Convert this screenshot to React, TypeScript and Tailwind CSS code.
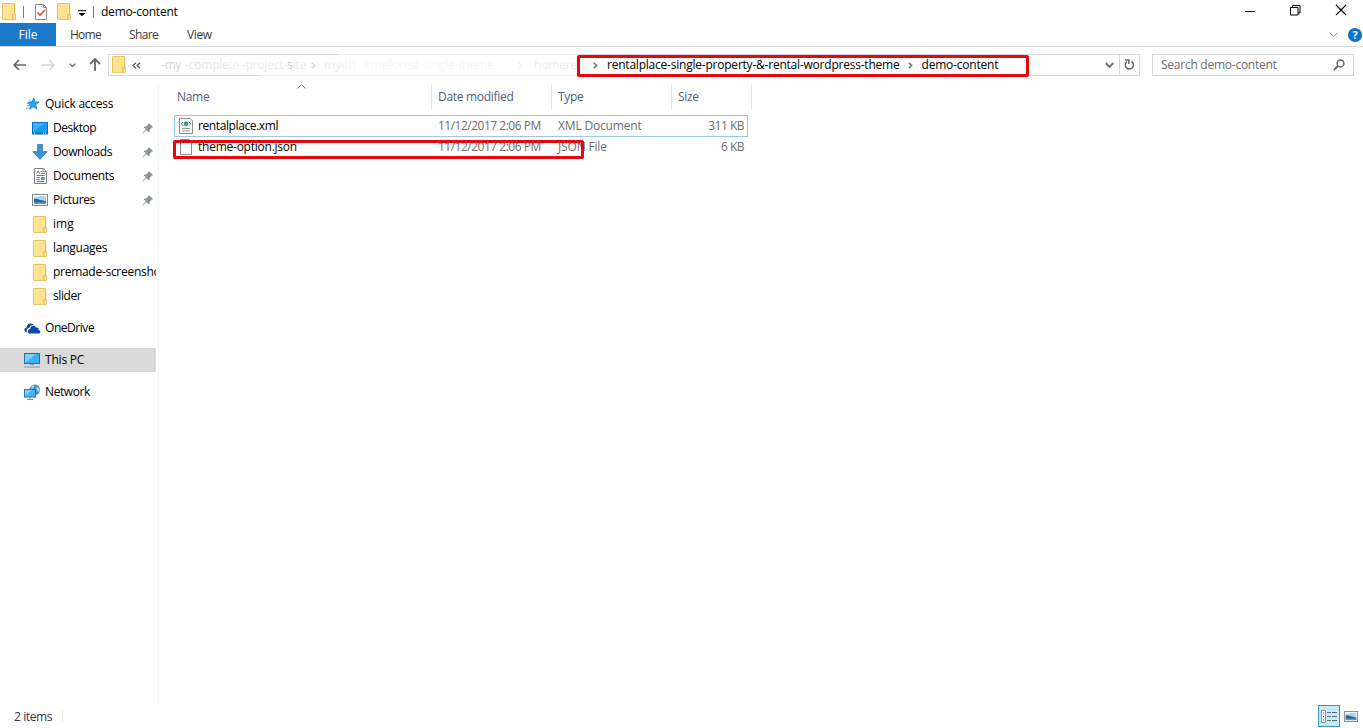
import type { ReactNode } from "react";

function Folder({ className = "" }: { className?: string }) {
  return (
    <svg width="14" height="17" viewBox="0 0 14 17" className={`shrink-0 ${className}`}>
      <path d="M.5 .5h12v11h.9v4.9H.5z" fill="#fde392" stroke="#e6c365" />
      <path d="M10.8 16v-4.4h1.9V1" fill="none" stroke="#e3b84b" />
    </svg>
  );
}

function Pin() {
  return (
    <svg width="12" height="12" viewBox="0 0 12 12" className="shrink-0">
      <path d="M6.6.8 11.3 5.2 9.8 5.6 7.9 7.6 7.7 10 6.3 9.9 4.4 8 1 11.3 .6 10.9 3.7 7.3 2 5.6 2 4.4 4.6 4.2 6.4 2.2z" fill="#8d969c" />
    </svg>
  );
}

function Star() {
  return (
    <svg width="16" height="16" viewBox="0 0 16 16" className="ml-[2px] shrink-0">
      <path d="M8.800 2 9.800 5.900 13.900 6 10.600 8.600 12 13 8.100 10.700 4.600 13.300 5.500 9.200 2.800 6.600 6.700 6z" fill="#2ea4ee" stroke="#1785cf" strokeWidth=".9" />
      <path d="M3.500 5h2.500M1.500 7.500h3M2 9.500h3M1 12.300h4" stroke="#5fb0e0" strokeWidth="1" />
    </svg>
  );
}

function Desktop() {
  return (
    <svg width="16" height="13" viewBox="0 0 16 13" className="shrink-0">
      <rect x=".5" y=".5" width="15" height="11.5" fill="#169bf0" stroke="#0c70b8" />
      <path d="M1 10V1h12z" fill="#38b2fb" />
      <path d="M1 11.2h14" stroke="#0a66ad" />
      <path d="M2 11.2h1M11 11.2h1M13 11.2h1" stroke="#fff" />
    </svg>
  );
}

function Download() {
  return (
    <svg width="16" height="16" viewBox="0 0 16 16" className="shrink-0">
      <path d="M5.5.5h5v7h4.7L8 15.4.8 7.5h4.7z" fill="#3b92dc" stroke="#2c7cc5" strokeWidth=".8" />
    </svg>
  );
}

function Documents() {
  return (
    <svg width="13" height="16" viewBox="0 0 13 16" className="shrink-0">
      <path d="M.5.5h8.6l3.4 3v12H.5z" fill="#fff" stroke="#7d7d7d" />
      <path d="M9 .5v3.2h3.5" fill="none" stroke="#7d7d7d" />
      <path d="M2.5 5.8 4.3 2.8 5.6 5.8M6.6 3.5h1.6M6.6 5.5h4M2.5 7.5h8M2.5 9.5h3.3M2.5 11.5h3.3M2.5 13.5h8" fill="none" stroke="#2f8d9c" />
      <path d="M6.8 9h4v3h-4z" fill="#5b9bb8" />
    </svg>
  );
}

function Picture({ small = false }: { small?: boolean }) {
  return (
    <svg width={small ? 14 : 16} height={small ? 11 : 12} viewBox="0 0 16 12" preserveAspectRatio="none" className="shrink-0">
      <rect x=".5" y=".5" width="15" height="11" fill="#fff" stroke="#858585" />
      <rect x="2" y="2" width="12" height="8" fill="#a9d3f5" />
      <path d="M2 4.800c3-.8 5 1.500 12 2.200v2H2z" fill="#2f6276" />
      <path d="M2 8h12v2H2z" fill="#4b92c8" />
      <path d="M2 2h6L5 3.5 2 3.8z" fill="#d8ecfb" />
    </svg>
  );
}

function OneDrive() {
  return (
    <svg width="17" height="11" viewBox="0 0 17 11" className="shrink-0">
      <path d="M2.8 9.5A2.9 2.9 0 0 1 .6 7.9C0 6 1.300 4.800 2.600 4.600 2.500 2.200 4.200.4 6.400.4 8 .3 9.300 1 10 2.200 7.800 1.700 5.900 2.900 5.500 4.800 3.300 5 2.100 7 2.800 9.500z" fill="#0c49a8" />
      <path d="M5.600 10.600C3.100 10.300 3 6.500 6.200 6 6.200 2.500 10.500 1.500 12 4.500 13.800 4.100 15 5.500 14.700 7 17 7.400 16.800 10.500 14.700 10.600z" fill="#0c49a8" />
    </svg>
  );
}

function Pc() {
  return (
    <svg width="16" height="16" viewBox="0 0 16 16" className="shrink-0">
      <rect x=".5" y="1.500" width="15" height="10" fill="#39b1f2" stroke="#286f9d" />
      <path d="M1 11V2h11z" fill="#7bd1fb" />
      <path d="M6 12.500h4M0 15h16" stroke="#7a97aa" />
    </svg>
  );
}

function NetworkIcon() {
  return (
    <svg width="17" height="16" viewBox="0 0 17 16" className="shrink-0">
      <circle cx="10.800" cy="5.800" r="5.300" fill="#3f8fc0" />
      <path d="M7.500 2.500c2-2 3.500-.5 2.500 1S8 5 7 4.500M13 3c1.500 0 2.500 2 2.500 3.500s-1.500 1.500-2.300.3-1.200-3-.2-3.800z" fill="#a9dcef" />
      <rect x=".5" y="5.500" width="11" height="7.500" fill="#42b5f2" stroke="#23729f" />
      <path d="M1 12V6h7z" fill="#79d0fa" />
      <path d="M6 13v2M3 15.400h6" stroke="#7091a4" />
    </svg>
  );
}

function FileDoc({ xml = false }: { xml?: boolean }) {
  return (
    <svg width="14" height="16" viewBox="0 0 14 16" className="shrink-0">
      <path d={xml ? "M.5.5H11l2.500 2.500v12.500H.5z" : "M1.500.5h9l2 2v13h-11z"} fill="#fdfdfd" stroke="#8c8c8c" />
      {xml && (
        <>
          <path d="M4 4 2.300 5.800 4 7.600M10 4l1.700 1.800L10 7.600" fill="none" stroke="#4b6688" />
          <circle cx="7" cy="5.800" r="2.200" fill="#3b9a87" />
          <circle cx="6.600" cy="5" r=".8" fill="#356ea6" />
          <path d="M3 10.500h8M3 12.800h8" stroke="#999" />
        </>
      )}
    </svg>
  );
}

function Chevron({ className = "" }: { className?: string }) {
  return (
    <svg width="5" height="7" viewBox="0 0 5 7" className={`shrink-0 ${className}`}>
      <path d="M.8.8 3.700 3.500.8 6.200" fill="none" stroke="#707070" strokeWidth="1.500" />
    </svg>
  );
}

function NavItem({ icon, label, pinned, root, selected, tracking = "tracking-[-0.2px]" }: {
  icon: ReactNode; label: string; pinned?: boolean; root?: boolean; selected?: boolean; tracking?: string;
}) {
  return (
    <div className={`flex h-6 w-[156px] items-center ${root ? "pl-6" : "pl-8"} ${selected ? "bg-[#d9d9d9]" : ""}`}>
      <span className="flex w-[21px] shrink-0 items-center"><span className="flex w-4 shrink-0 justify-center">{icon}</span></span>
      <span className={`min-w-0 flex-1 overflow-hidden whitespace-nowrap text-black ${tracking}`}>{label}</span>
      {pinned && <span className="mr-[2px]"><Pin /></span>}
    </div>
  );
}

function TitleBar() {
  return (
    <header className="flex h-[23px] shrink-0 items-center">
      <Folder className="ml-[2px]" />
      <div className="ml-[7px] h-3 w-px bg-[#777]" />
      <svg width="12" height="16" viewBox="0 0 12 16" className="ml-[11px] mt-px">
        <path d="M.5.5h8l3 3v12H.5z" fill="#fff" stroke="#8a8a8a" />
        <path d="M8.500.5v3h3" fill="none" stroke="#8a8a8a" />
        <path d="m2.500 8.500 2.500 2.800 5-5.600" fill="none" stroke="#e3562c" strokeWidth="1.700" />
      </svg>
      <Folder className="ml-[10px]" />
      <svg width="8" height="7" viewBox="0 0 8 7" className="ml-[7px] mt-[3px]">
        <path d="M0 .7h8" stroke="#000" /><path d="M.5 3h7L4 6.300z" />
      </svg>
      <div className="ml-[7px] h-3 w-px bg-[#777]" />
      <span className="ml-[7px] pt-px tracking-[-0.22px] text-black">demo-content</span>
      <div className="ml-auto mr-[16px] flex items-center">
        <svg width="11" height="12" viewBox="0 0 11 12"><path d="M1 5.500h10" stroke="#000" /></svg>
        <svg width="11" height="11" viewBox="0 0 11 11" className="ml-[35px] -mt-[3px]">
          <path d="M.5 2.500h7.500v7.500H.5zM2.500 2.500v-2h7.500v7.500H8" fill="none" stroke="#000" />
        </svg>
        <svg width="12" height="12" viewBox="0 0 12 12" className="ml-[34px] -mt-[4px]"><path d="m1 1 10 10M11 1 1 11" stroke="#000" strokeWidth="1.100" /></svg>
      </div>
    </header>
  );
}

function Ribbon() {
  return (
    <nav className="flex h-6 shrink-0 items-stretch border-b border-[#dadbdc] leading-[24px] text-[#3b3b3b]">
      <div className="w-14 bg-[#1979ca] text-center text-white">File</div>
      <div className="ml-[14px] w-[59px] tracking-[-0.75px]">Home</div>
      <div className="w-[58px] tracking-[-0.6px]">Share</div>
      <div className="tracking-[-0.4px]">View</div>
      <div className="ml-auto mr-px flex items-center gap-[10px]">
        <svg width="9" height="5" viewBox="0 0 9 5"><path d="m.5.5 4 3.900L8.500.5" fill="none" stroke="#8c8c8c" /></svg>
        <span className="flex size-[14px] items-center justify-center rounded-full bg-[#0b72c9] text-[11px] font-bold text-white">?</span>
      </div>
    </nav>
  );
}

function AddressRow() {
  return (
    <div className="flex h-[37px] shrink-0 items-center">
      <svg width="13" height="12" viewBox="0 0 13 12" className="-mt-[2px] ml-[13px]"><path d="M6 1 1.200 6 6 11M1.500 6H13" fill="none" stroke="#676767" strokeWidth="1.700" /></svg>
      <svg width="13" height="12" viewBox="0 0 13 12" className="-mt-[2px] ml-[16px]"><path d="m7 1 5 5-5 5M11.500 6H0" fill="none" stroke="#d2d2d2" strokeWidth="1.400" /></svg>
      <svg width="7" height="5" viewBox="0 0 7 5" className="-mt-px ml-[14px]"><path d="m.7.7 2.800 2.800L6.300.7" fill="none" stroke="#777" strokeWidth="1.500" /></svg>
      <svg width="12" height="13" viewBox="0 0 12 13" className="-mt-[2px] ml-[13px]"><path d="m1 6 5-5 5 5M6 1.500V13" fill="none" stroke="#676767" strokeWidth="1.800" /></svg>
      <div className="relative ml-[7px] -mt-px flex h-[22px] w-[1032px] items-center border border-[#d9d9d9]">
        <Folder className="-mt-px ml-[3px]" />
        <svg width="9" height="7" viewBox="0 0 9 7" className="ml-[6px] mt-px"><path d="M4 .7 1 3.500 4 6.300M8 .7 5 3.500 8 6.300" fill="none" stroke="#555" strokeWidth="1.200" /></svg>
        <div className="ml-[20px] flex w-[432px] items-center whitespace-nowrap tracking-[-0.2px]">
          <span className="w-[24px] text-[#d4d4d4]">-my</span>
          <span className="w-[54px] text-[#e6e6e6]">-comple<span className="text-[#f1f1f1]">te</span></span>
          <span className="w-[72px] pl-[3px] text-[#ececec]">-project-<span className="text-[#c8c8c8]">s</span>ite</span>
          <Chevron className="opacity-30" />
          <span className="ml-[8px] w-[40px] text-[#eeeeee]">my-<span className="text-[#f6f6f6]">th</span></span>
          <span className="w-[154px] text-[#f5f5f5]">emeforest-single-theme</span>
          <Chevron className="opacity-10" />
          <span className="ml-[11px] text-[#ededed]">homerent</span>
        </div>
        <Chevron />
        <span className="ml-[9px] tracking-[-0.22px] text-black">rentalplace-single-property-&amp;-rental-wordpress-theme</span>
        <Chevron className="ml-[8px]" />
        <span className="ml-[9px] tracking-[-0.2px] text-black">demo-content</span>
        <div className="ml-auto flex h-full items-center">
          <svg width="9" height="7" viewBox="0 0 9 7" className="mt-px"><path d="m.8 1 3.700 4L8.200 1" fill="none" stroke="#707070" strokeWidth="1.900" /></svg>
          <div className="ml-[5px] flex h-full w-5 items-center justify-center border-l border-[#d9d9d9]">
            <svg width="11" height="12" viewBox="0 0 11 12"><path d="M7.500 2.500A4.100 4.100 0 1 1 3 2.700M1 1h3.800v4" fill="none" stroke="#666" strokeWidth="1.500" /></svg>
          </div>
        </div>
        <div className="absolute left-[230px] top-[-1px] h-px w-[240px] bg-[#efefef]" />
        <div className="absolute left-[150px] top-[20px] h-px w-[319px] bg-[#efefef]" />
        <div className="absolute left-[468px] top-0 h-[22px] w-[452px] rounded-[2px] border-[3px] border-[#e6080d]" />
      </div>
      <div className="-mt-px ml-3 flex h-[22px] w-[202px] items-center justify-between border border-[#d9d9d9] pl-2 pr-[8px] text-[#6d6d6d]">
        <span className="tracking-[-0.25px]">Search demo-content</span>
        <svg width="12" height="12" viewBox="0 0 12 12"><circle cx="7.500" cy="4.400" r="3.400" fill="none" stroke="#666" strokeWidth="1.500" /><path d="M5 7 1 11" stroke="#666" strokeWidth="1.900" /></svg>
      </div>
    </div>
  );
}

function FileRow({ name, date, type, size, xml }: { name: string; date: string; type: string; size: string; xml?: boolean }) {
  return (
    <div className={`flex h-[22px] w-[574px] items-center border text-[#6d6d6d] ${xml ? "border-[#99c9e8]" : "border-transparent"}`}>
      <div className="flex w-[263px] items-center gap-[5px] pl-1 text-black">
        <FileDoc xml={xml} />
        <span className={xml ? "tracking-[-0.4px]" : "tracking-[-0.24px]"}>{name}</span>
      </div>
      <span className="w-[120px] tracking-[-0.5px]">{date}</span>
      <span className="w-[120px] tracking-[-0.17px]">{type}</span>
      <span className="flex-1 pr-[3px] text-right tracking-[-0.5px]">{size}</span>
    </div>
  );
}

export default function App() {
  return (
    <div className="flex h-[728px] w-[1363px] flex-col overflow-hidden bg-white font-['Open_Sans','Noto_Sans',sans-serif] text-[12px] leading-4">
      <TitleBar />
      <Ribbon />
      <AddressRow />
      <div className="flex min-h-0 flex-1">
        <aside className="w-[159px] shrink-0 border-r border-[#f3f3f3] pt-2">
          <NavItem root icon={<Star />} label="Quick access" tracking="tracking-[-0.25px]" />
          <NavItem icon={<Desktop />} label="Desktop" pinned tracking="tracking-[-0.45px]" />
          <NavItem icon={<Download />} label="Downloads" pinned tracking="tracking-[-0.4px]" />
          <NavItem icon={<Documents />} label="Documents" pinned tracking="tracking-[-0.35px]" />
          <NavItem icon={<Picture />} label="Pictures" pinned tracking="tracking-[-0.4px]" />
          <NavItem icon={<Folder />} label="img" tracking="tracking-normal" />
          <NavItem icon={<Folder />} label="languages" tracking="tracking-[-0.25px]" />
          <NavItem icon={<Folder />} label="premade-screenshots" tracking="tracking-[-0.28px]" />
          <NavItem icon={<Folder />} label="slider" tracking="tracking-[-0.4px]" />
          <div className="mt-2 flex flex-col gap-2">
            <NavItem root icon={<OneDrive />} label="OneDrive" tracking="tracking-[-0.45px]" />
            <NavItem root icon={<Pc />} label="This PC" selected />
            <NavItem root icon={<NetworkIcon />} label="Network" tracking="tracking-[-0.4px]" />
          </div>
        </aside>
        <main className="relative flex-1">
          <div className="ml-[16px] grid h-[26px] w-[577px] grid-cols-[257px_120px_120px_80px] leading-[26px] tracking-[-0.3px] text-[#4c607a]">
            <span className="relative border-r border-[#e3e5e8] pl-[2px]">Name
              <svg width="9" height="5" viewBox="0 0 9 5" className="absolute left-[122px] top-0"><path d="m.5 4.500 4-4 4 4" fill="none" stroke="#777" /></svg>
            </span>
            <span className="border-r border-[#e3e5e8] pl-[6px]">Date modified</span>
            <span className="border-r border-[#e3e5e8] pl-[6px]">Type</span>
            <span className="border-r border-[#e3e5e8] pl-[6px]">Size</span>
          </div>
          <div className="ml-[15px] mt-[5px]">
            <FileRow xml name="rentalplace.xml" date="11/12/2017 2:06 PM" type="XML Document" size="311 KB" />
            <div className="-mt-px"><FileRow name="theme-option.json" date="11/12/2017 2:06 PM" type="JSON File" size="6 KB" /></div>
          </div>
          <div className="absolute left-[14px] top-[56px] h-[19px] w-[411px] rounded-[2px] border-[3px] border-[#e6080d]" />
        </main>
      </div>
      <footer className="flex h-6 shrink-0 items-center text-[#2b3b57]">
        <span className="ml-[14px] pt-[2px] tracking-[-0.4px]">2 items</span>
        <div className="ml-[10px] h-3 w-px bg-[#eee]" />
        <div className="ml-auto flex h-full items-center">
          <div className="flex h-[22px] w-[22px] items-center justify-center border border-[#2a9bcb] bg-[#c9e9f8]">
            <svg width="16" height="13" viewBox="0 0 16 13">
              <path d="M.5.5h4v12h-4z" fill="#fff" stroke="#9a8f92" /><path d="M2 3h1M2 6.500h1M2 10h1" stroke="#3b6d92" />
              <path d="M6 2.500h4M11 2.500h5M6 6.500h4M11 6.500h5M6 10.500h4M11 10.500h5" stroke="#5b6b78" />
            </svg>
          </div>
          <span className="ml-1 mr-[5px]"><Picture small /></span>
        </div>
      </footer>
    </div>
  );
}
